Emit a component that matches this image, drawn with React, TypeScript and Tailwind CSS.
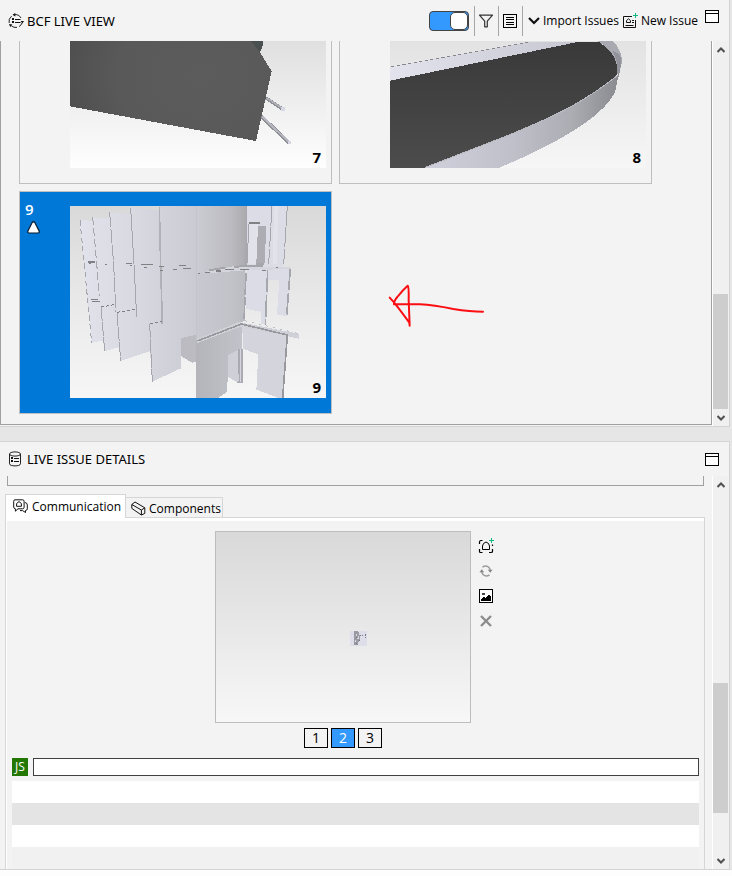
import React, { useState } from 'react';

interface PanelHeaderProps {
  title: string;
  icon: React.ReactNode;
  className: string;
  children?: React.ReactNode;
}

interface ScrollBarProps {
  label: string;
  thumbClass: string;
}

interface IssueCardProps {
  id: number;
  selected?: boolean;
  children: React.ReactNode;
}

const LiveViewIcon = () => (
  <svg width="16" height="16" viewBox="0 0 16 16" fill="none" stroke="#222" strokeWidth="1">
    <path d="M6 1.8 A6.4 6.4 0 0 1 13 5 M14 10 A6.4 6.4 0 0 1 11 13.6 M9 14.4 A6.6 6.6 0 0 1 3.4 12.8 M1.2 10 A6.4 6.4 0 0 1 3.6 3.2" />
    <path d="M7.3 0 L4.5 1.8 L7.3 3.6Z M12.6 8 L16 8 L14.4 10.6Z M1 11 L4.4 11.6 L2.2 14Z" fill="#111" stroke="none" />
    <path d="M4 5h2v2H4z M4 8h2v2H4z" fill="#111" stroke="none" />
    <path d="M7 6.5h5.5 M7 9.5h5.5" stroke="#111" />
  </svg>
);

const DetailsIcon = () => (
  <svg width="14" height="16" viewBox="0 0 14 16" fill="none" stroke="#222" strokeWidth="1">
    <path d="M1.5 3v9.8c0 2.8 11 2.8 11 0V3" />
    <ellipse cx="7" cy="3" rx="5.5" ry="2.1" />
    <path d="M3 6h2v2H3z M3 9h2v2H3z" fill="#111" stroke="none" />
    <path d="M6 7.5h5 M6 10.5h5" stroke="#111" />
  </svg>
);

const WindowIcon = () => (
  <svg width="14" height="13" viewBox="0 0 14 13" fill="white" stroke="#000" shapeRendering="crispEdges">
    <path d="M0.5 0.5h13v12h-13z M0.5 3.5h13" />
  </svg>
);

const FilterIcon = () => (
  <svg width="16" height="16" viewBox="0 0 16 16" fill="none" stroke="#333" strokeWidth="1.2">
    <path d="M1.5 2.2h13L9.3 8.2v5.6H6.7V8.2Z" strokeLinejoin="round" />
  </svg>
);

const ListIcon = () => (
  <svg width="14" height="14" viewBox="0 0 14 14" fill="none" stroke="#000" shapeRendering="crispEdges">
    <path d="M0.5 0.5h13v13h-13z M3 3.5h8 M3 5.5h8 M3 8.5h8 M3 10.5h8" />
  </svg>
);

const ChevronIcon = () => (
  <svg width="12" height="8" viewBox="0 0 12 8" fill="none" stroke="#111" strokeWidth="2.2">
    <path d="M1 1 L6 6 L11 1" />
  </svg>
);

const NewIssueIcon = () => (
  <svg className="shrink-0" width="16" height="16" viewBox="0 0 16 16" fill="none" stroke="#111">
    <path d="M9 3.5H0.5v11h12V7" />
    <path d="M3.5 9.5V7.6L5.5 5.8L7.5 7.6V9.5Z M2.5 12.5H10.5 M9 7.5h2 M9 9.5h2" />
    <path d="M12.5 0v5 M10 2.5h5" stroke="#10b981" />
  </svg>
);

const CommunicationIcon = () => (
  <svg className="shrink-0" width="15" height="15" viewBox="0 0 15 15" fill="none" stroke="#111">
    <path d="M2 0.8h7.6q1.5 0 1.5 1.5v6q0 1.5-1.5 1.5H5L2.4 12.2V9.8Q0.7 9.6 0.7 8V2.3Q0.7 0.8 2 0.8Z" />
    <path d="M3.6 7.3V4.5L6 2.6L8.4 4.5V7.3Z" />
    <path d="M12 3.5Q14.3 3.8 14.3 6v3.8q0 1.6-1.8 1.7v2L9.6 11.6H7" />
  </svg>
);

const ComponentsIcon = () => (
  <svg className="shrink-0" width="15" height="15" viewBox="0 0 15 15" fill="none" stroke="#111" strokeLinejoin="round">
    <path d="M0.8 3.5L4 1L13.8 6.8V12.4L10.4 14L0.8 7.4Z M0.8 3.5L10.4 9V14 M10.4 9L13.8 6.8" />
  </svg>
);

const CaptureIcon = () => (
  <svg width="16" height="16" viewBox="0 0 16 16" fill="none" stroke="#000">
    <path d="M1.5 6V4.5Q1.5 2.5 3 2.5H4.5 M1.5 11v2.5q0 1 1 1H4.5 M11 14.5h2q1.5 0 1.5-1V11 M14.5 8V6.5" strokeWidth="1.2" />
    <path d="M4.5 11.5V8L5.5 5.5L8 4L10.5 5.5L11.5 8v3.5Z" />
    <path d="M13.5 0v5 M11 2.5h5" stroke="#10b981" />
  </svg>
);

const RefreshIcon = () => (
  <svg width="16" height="16" viewBox="0 0 16 16" fill="none" stroke="#999" strokeWidth="1.5">
    <path d="M4.5 4.2Q8 1.8 11 4.5L12.4 7 M11.5 11.8Q8 14.2 5 11.5L3.6 9" />
    <path d="M9.8 6.8h4.8l-2.4 3z M1.4 9.2h4.8l-2.4-3z" fill="#888" stroke="none" />
  </svg>
);

const PictureIcon = () => (
  <svg width="14" height="14" viewBox="0 0 14 14" shapeRendering="crispEdges">
    <path d="M0.5 0.5h13v13h-13z" fill="white" stroke="#000" />
    <path d="M2 12V10l3-2l2 1l2-3h1l2 2v4Z" />
    <path d="M3 3.5h2.5v2H3z" fill="#444" />
  </svg>
);

const DeleteIcon = () => (
  <svg width="14" height="14" viewBox="0 0 14 14" stroke="#8c8c8c" strokeWidth="2.4">
    <path d="M2 2L12 12 M12 2L2 12" />
  </svg>
);

const PanelHeader: React.FC<PanelHeaderProps> = ({ title, icon, className, children }) => {
  return (
    <header className={`flex items-center pl-2 pr-[10px] ${className}`}>
      {icon}
      <h2 className="grow whitespace-nowrap font-['Noto_Sans','Open_Sans',sans-serif] text-[13px] leading-4">{title}</h2>
      {children}
    </header>
  );
};

const ScrollArrow: React.FC<{ up?: boolean }> = ({ up }) => (
  <svg width="8" height="6" viewBox="0 0 8 6" fill="none" stroke="#505050" strokeWidth="2">
    <path d={up ? 'M0.5 5L4 1.5L7.5 5' : 'M0.5 1L4 4.5L7.5 1'} />
  </svg>
);

const ScrollBar: React.FC<ScrollBarProps> = ({ label, thumbClass }) => {
  return (
    <div className="flex w-[17px] shrink-0 flex-col border-l border-white bg-[#f0f0f0]">
      <button type="button" aria-label={`${label} up`} className="flex h-[17px] items-center justify-center">
        <ScrollArrow up />
      </button>
      <div className="flex grow flex-col justify-end">
        <div className={`mr-px bg-[#cdcdcd] ${thumbClass}`} />
      </div>
      <button type="button" aria-label={`${label} down`} className="flex h-[17px] items-center justify-center">
        <ScrollArrow />
      </button>
    </div>
  );
};

const IssueCard: React.FC<IssueCardProps> = ({ id, selected, children }) => {
  return (
    <article
      className={`flex w-[313px] shrink-0 border border-[#bfbfbf] pt-[14px] pb-[15px] pr-[5px] ${
        selected ? 'bg-[#0078d7] text-white' : ''
      }`}
    >
      <div className="w-[50px] shrink-0 pl-[5px]">
        {selected && (
          <>
            <div className="-mt-[5px] text-[15px] leading-4 font-semibold">{id}</div>
            <svg className="mt-1 ml-[2px]" width="13" height="13" viewBox="0 0 13 13">
              <path
                d="M5.3 1.3Q6.5 0.2 7.7 1.3L12.1 10Q12.6 12 11 12H2Q0.4 12 0.9 10Z"
                fill="white"
                stroke="#0a1a2a"
                strokeWidth="1.2"
              />
            </svg>
          </>
        )}
      </div>
      <div className="relative h-[192px] w-[256px]">
        {children}
        <span className="absolute right-[5px] bottom-[3px] text-[15px] leading-4 font-bold text-black">{id}</span>
      </div>
    </article>
  );
};

const SlabScene = () => (
  <svg width="256" height="192" viewBox="30 -163 768 576" shapeRendering="crispEdges">
    <defs>
      <linearGradient id="slab-sky" x1="0" y1="0" x2="0" y2="1">
        <stop offset="0" stopColor="#cfcfcf" />
        <stop offset="0.35" stopColor="#e0e0e0" />
        <stop offset="1" stopColor="#fefefe" />
      </linearGradient>
      <radialGradient id="slab-face" cx="0.65" cy="0.6" r="0.7">
        <stop offset="0" stopColor="#5c5c5c" />
        <stop offset="0.6" stopColor="#595959" />
        <stop offset="1" stopColor="#4e4e4e" />
      </radialGradient>
    </defs>
    <rect x="30" y="-163" width="768" height="576" fill="url(#slab-sky)" />
    <path d="M618 203L668 236" stroke="#8f8f96" strokeWidth="10" />
    <path d="M620 203L668 234" stroke="#b0b0b8" strokeWidth="5" />
    <path d="M604 258L688 338" stroke="#8f8f96" strokeWidth="11" />
    <path d="M606 258L688 336" stroke="#b6b6bf" strokeWidth="6" />
    <path d="M664 231h10v10h-10z M684 332h9v10h-9z" fill="#d6d6e4" />
    <path d="M30 -163H600V66L635 123L588 332L30 228Z" fill="url(#slab-face)" />
    <path d="M574 33H609V44L600 66Z" fill="#4a504f" />
  </svg>
);

const CurvedScene = () => (
  <svg width="256" height="192" viewBox="180 -163 768 576" shapeRendering="crispEdges">
    <defs>
      <linearGradient id="curve-sky" x1="0" y1="0" x2="0" y2="1">
        <stop offset="0" stopColor="#d6d6d6" />
        <stop offset="0.35" stopColor="#e3e3e3" />
        <stop offset="1" stopColor="#f6f6f6" />
      </linearGradient>
      <linearGradient id="curve-back" x1="0" y1="0" x2="1" y2="0">
        <stop offset="0" stopColor="#e3e3ee" />
        <stop offset="1" stopColor="#c6c6d0" />
      </linearGradient>
      <linearGradient id="curve-floor" x1="0" y1="0" x2="0" y2="1">
        <stop offset="0" stopColor="#393939" />
        <stop offset="1" stopColor="#4c4c4c" />
      </linearGradient>
      <linearGradient id="curve-rim" x1="0" y1="0" x2="1" y2="0">
        <stop offset="0" stopColor="#d0d0dc" />
        <stop offset="0.45" stopColor="#c0c0ca" />
        <stop offset="0.75" stopColor="#acacb3" />
        <stop offset="1" stopColor="#88888f" />
      </linearGradient>
    </defs>
    <rect x="180" y="-163" width="768" height="576" fill="url(#curve-sky)" />
    <path d="M180 110L604 34H756L180 152Z" fill="url(#curve-back)" />
    <path d="M184 109L604 34" stroke="#86868c" strokeWidth="3" strokeDasharray="9 8" />
    <path d="M748 34H806Q866 76 864 120C862 150 800 185 740 222C680 255 560 306 496 334L284 413H180V151Z" fill="url(#curve-floor)" />
    <path d="M804 33H850Q878 62 875 98L866 140L862 128Q866 72 804 33Z" fill="#a9a9b1" />
    <path d="M846 60Q878 72 874 98L866 140L862 128Q865 90 846 60Z" fill="#92929a" />
    <path
      d="M864 132L872 104L856 182C840 222 790 265 716 310C650 350 560 391 505 413H284L496 331C560 306 680 255 740 220C800 184 842 154 864 132Z"
      fill="url(#curve-rim)"
    />
    <path d="M284 412L496 330C560 305 680 254 740 219C800 184 842 152 864 134" fill="none" stroke="#b9b9c2" strokeWidth="3" />
  </svg>
);

const WallsScene = () => (
  <svg width="256" height="192" viewBox="210 63 768 576" shapeRendering="crispEdges">
    <defs>
      <linearGradient id="walls-sky" x1="0" y1="0" x2="0" y2="1">
        <stop offset="0" stopColor="#d9d9d9" />
        <stop offset="0.6" stopColor="#ececec" />
        <stop offset="1" stopColor="#f6f6f6" />
      </linearGradient>
      <linearGradient id="walls-left" x1="0" y1="0" x2="1" y2="0">
        <stop offset="0" stopColor="#e2e2ec" />
        <stop offset="0.5" stopColor="#d8d8e1" />
        <stop offset="1" stopColor="#cacad2" />
      </linearGradient>
      <linearGradient id="walls-core" x1="0" y1="0" x2="1" y2="0">
        <stop offset="0" stopColor="#cbcbd3" />
        <stop offset="0.7" stopColor="#bababf" />
        <stop offset="1" stopColor="#a9a9ae" />
      </linearGradient>
      <linearGradient id="walls-front" x1="0" y1="0" x2="1" y2="0">
        <stop offset="0" stopColor="#b4b4ba" />
        <stop offset="1" stopColor="#c2c2ca" />
      </linearGradient>
    </defs>
    <rect x="210" y="63" width="768" height="576" fill="url(#walls-sky)" />
    <path
      d="M238 104L278 108V97L328 101V82L392 88V66L478 76V63H592V530L576 533L543 513V550L457 590L450 498L362 528L357 487L314 498L309 467L275 473Z"
      fill="url(#walls-left)"
    />
    <path d="M592 63H741V240L734 262V408L592 466Z" fill="url(#walls-core)" />
    <path d="M592 265L734 252V408L592 466Z" fill="#c6c6ce" fillOpacity="0.6" />
    <path d="M543 460L592 448V530L576 533L543 513Z" fill="#bbbbc1" />
    <path d="M741 63H862L850 248H872L860 394L831 388L838 286H806L796 420L782 416V380L738 372V262H741Z" fill="#dcdce6" />
    <path d="M822 63H836L830 238H818Z M746 118H774V236H744Z" fill="#e2e2ea" />
    <path d="M774 123H798L795 234H769Z" fill="#acacb2" />
    <path d="M588 470L726 416V490L684 510L682 620L654 639H588Z" fill="url(#walls-front)" />
    <path d="M726 416L862 452L848 639H836L769 614L775 508L730 492Z" fill="#d4d4dd" />
    <path d="M684 510L716 494V594L684 576Z" fill="#cfcfd8" />
    <path d="M714 493H730V594H708L716 588Z" fill="#aaaab0" />
    <path d="M720 493V590" stroke="#d5d5dd" strokeWidth="3" />
    <path d="M590 462L716 411L896 446V461L726 424L592 474Z" fill="#d0d0d8" />
    <g fill="none" stroke="#a6a6ad" strokeWidth="3">
      <path d="M592 468L724 417L862 450L848 639" stroke="#98989d" strokeWidth="5" />
      <path d="M240 106L252 230L275 473" strokeDasharray="16 10" />
      <path d="M278 97L290 235L298 332" strokeDasharray="24 9" />
      <path d="M329 82L341 238L348 382" strokeDasharray="44 5" />
      <path d="M392 68L402 238L410 395" />
      <path d="M478 65L482 240L487 416" stroke="#b0b0b7" strokeWidth="5" />
      <path d="M303 366L314 498 M351 382L362 528 M449 416L457 590" strokeDasharray="42 3" />
      <path d="M741 63L737 240 M816 63L806 238 M862 63L851 238" strokeDasharray="60 4" />
      <path d="M738 264L732 408 M803 256L796 420 M871 250L860 394" strokeWidth="5" strokeDasharray="66 7" />
      <path d="M746 118L742 235" />
    </g>
    <path d="M590 63V466" stroke="#c4c4cb" strokeWidth="3" />
    <path d="M620 258L700 244L872 247V252L735 256L630 264Z" fill="#d5d5de" />
    <g fill="none" stroke="#808085" strokeWidth="3">
      <path d="M303 366L349 358 M351 382L407 373 M450 416L487 409" strokeDasharray="9 6" />
      <path d="M264 231H286 M378 235H396 M422 238H460 M536 241H558 M746 114H780" strokeWidth="4" />
      <path d="M266 235H272 M315 238H321 M390 240H396 M432 247H442 M478 243H492 M480 256H490 M520 253H532 M550 250H574" />
      <path d="M594 265H600 M614 262H630 M648 258H662 M676 254H702 M720 253H748 M786 256H798 M828 247H834" strokeWidth="4" />
      <path d="M626 256L676 248 M702 245L790 242 M768 236H792" stroke="#a5a5ab" strokeWidth="6" />
      <path d="M274 343H294 M276 348H300" />
      <path d="M734 407L896 446" stroke="#aaaab0" strokeWidth="2" strokeDasharray="6 16" />
    </g>
  </svg>
);

const RedArrow = () => (
  <svg
    className="pointer-events-none absolute top-[229px] left-[379px]"
    width="120"
    height="70"
    viewBox="0 0 360 210"
    fill="none"
    stroke="#fb0d12"
    strokeWidth="6"
    strokeLinecap="round"
    strokeLinejoin="round"
  >
    <path d="M309 125Q270 125 220 117Q160 105 120 103L42 103Q41 93 52 81Q68 60 83 47Q87 50 86 90L89 167L88 158Q62 122 42 97L29 83" />
  </svg>
);

const ToolbarDivider = () => <span className="h-[30px] w-px bg-[#a6a6a6]" />;

const LiveView = () => {
  const [live, setLive] = useState(true);

  return (
    <section className="border-r border-b border-[#d4d4d4] bg-[#f3f3f3]">
      <PanelHeader title="BCF LIVE VIEW" icon={<span className="w-[19px]"><LiveViewIcon /></span>} className="h-[41px]">
        <input
          type="checkbox"
          role="switch"
          aria-label="Live view"
          checked={live}
          onChange={(e) => setLive(e.target.checked)}
          className="mr-[5px] flex h-5 w-10 shrink-0 appearance-none items-center rounded border border-[#444] bg-white before:h-[18px] before:w-[18px] before:rounded-[5px] before:border before:border-[#444] before:bg-white checked:justify-end checked:bg-[#3399ff]"
        />
        <ToolbarDivider />
        <button type="button" aria-label="Filter" className="flex w-[23px] justify-center">
          <FilterIcon />
        </button>
        <ToolbarDivider />
        <button type="button" aria-label="List" className="flex w-[23px] justify-center">
          <ListIcon />
        </button>
        <ToolbarDivider />
        <button type="button" className="ml-[5px] flex items-center gap-[3px] text-[12px] leading-4 whitespace-nowrap">
          <ChevronIcon />
          Import Issues
        </button>
        <button type="button" className="ml-[4px] flex items-center gap-[2px] text-[12px] leading-4 whitespace-nowrap">
          <NewIssueIcon />
          New Issue
        </button>
        <button type="button" aria-label="Maximize live view" className="mt-[10px] ml-[7px] self-start">
          <WindowIcon />
        </button>
      </PanelHeader>
      <div className="flex h-[385px]">
        <div className="mb-px flex grow overflow-hidden border-r border-b border-l border-[#a0a0a0]">
          <div className="relative flex grow flex-col justify-end gap-[7px] pb-[10px] pl-[18px]">
            <div className="flex gap-[7px]">
              <IssueCard id={7}>
                <SlabScene />
              </IssueCard>
              <IssueCard id={8}>
                <CurvedScene />
              </IssueCard>
            </div>
            <div className="flex">
              <IssueCard id={9} selected>
                <WallsScene />
              </IssueCard>
            </div>
            <RedArrow />
          </div>
        </div>
        <ScrollBar label="Scroll issues" thumbClass="h-[115px]" />
      </div>
    </section>
  );
};

const Snapshot = () => (
  <svg className="absolute top-[99px] left-[134px]" width="17" height="15" viewBox="0 0 17 15" shapeRendering="crispEdges">
    <path d="M0 0h17v15H0z" fill="#dedeea" />
    <path d="M4 0h4v1h1v3h1v6h-1v1H8v3H4z" fill="#9a9aa2" />
    <path d="M6 3h1v2H6z M8 5h1v3H8z M5 9h1v2H5z M7 7h1v1H7z" fill="#d9d9e4" />
    <path d="M6 6h1v1H6z M10 4h1v1h-1z M12 4h1v1h-1z M15 3h1v2h-1z M9 9h1v1H9z M15 6h1v1h-1z M6 12h1v1H6z" fill="#77777f" />
  </svg>
);

const Communication = () => {
  const [page, setPage] = useState(2);
  const [comment, setComment] = useState('');

  const tools = [
    { label: 'Add viewpoint', icon: <CaptureIcon /> },
    { label: 'Update viewpoint', icon: <RefreshIcon /> },
    { label: 'Load picture', icon: <PictureIcon /> },
    { label: 'Delete viewpoint', icon: <DeleteIcon /> },
  ];

  return (
    <div role="tabpanel" className="border-x border-t border-[#d6d6d6]">
      <div className="border-t-[3px] border-l border-white pt-[10px] pr-[5px] pl-[5px]">
        <div className="flex justify-center gap-[7px] pr-[2px]">
          <div className="flex flex-col items-center gap-[5px]">
            <div className="relative h-[192px] w-[256px] border border-[#bdbdbd] bg-linear-to-b from-[#d9d9d9] to-[#f7f7f7]">
              <Snapshot />
            </div>
            <nav className="flex gap-[3px]">
              {[1, 2, 3].map((n) => (
                <button
                  key={n}
                  type="button"
                  onClick={() => setPage(n)}
                  className={`flex h-5 w-6 items-center justify-center border border-black text-[14px] leading-4 ${
                    n === page ? 'bg-[#3399ff] text-white' : ''
                  }`}
                >
                  {n}
                </button>
              ))}
            </nav>
          </div>
          <div className="flex flex-col gap-[9px] pt-[7px]">
            {tools.map((tool) => (
              <button key={tool.label} type="button" aria-label={tool.label} className="flex h-4 w-4 items-center justify-center">
                {tool.icon}
              </button>
            ))}
          </div>
        </div>
        <div className="mt-[10px] flex gap-[5px]">
          <label htmlFor="comment" className="flex h-[18px] w-4 items-center justify-center bg-[#237804] text-[12px] leading-4 text-white">
            JS
          </label>
          <input
            id="comment"
            type="text"
            value={comment}
            onChange={(e) => setComment(e.target.value)}
            className="h-[18px] min-w-0 grow border border-[#404040] bg-white px-1 text-[12px] outline-none"
          />
        </div>
        <table aria-label="Comments" className="mt-[5px] w-full">
          <tbody>
            <tr className="h-[22px] bg-white"><td /></tr>
            <tr className="h-[22px] bg-[#e4e4e4]"><td /></tr>
            <tr className="h-[22px] bg-white"><td /></tr>
            <tr className="h-[22px] bg-[#f1f1f1]"><td /></tr>
          </tbody>
        </table>
      </div>
    </div>
  );
};

const IssueDetails = () => {
  return (
    <section className="border-y border-r border-[#d4d4d4] bg-[#f3f3f3]">
      <PanelHeader title="LIVE ISSUE DETAILS" icon={<span className="w-[19px]"><DetailsIcon /></span>} className="h-[34px]">
        <button type="button" aria-label="Maximize details">
          <WindowIcon />
        </button>
      </PanelHeader>
      <div className="flex">
        <div className="min-w-0 grow pr-[7px] pl-[5px]">
          <div className="mr-px ml-[2px] h-[10px] border-x border-b border-[#a0a0a0]" />
          <div role="tablist" className="mt-2 flex items-end text-[12px] leading-4">
            <button
              type="button"
              role="tab"
              aria-selected="true"
              className="relative -mb-px flex h-[24px] w-[121px] items-center gap-1 border-x border-t border-[#d6d6d6] bg-white pl-[7px]"
            >
              <CommunicationIcon />
              Communication
            </button>
            <button
              type="button"
              role="tab"
              aria-selected="false"
              className="flex h-5 w-[97px] items-center gap-[3px] border-t border-r border-[#d6d6d6] pt-[2px] pl-[5px]"
            >
              <ComponentsIcon />
              Components
            </button>
          </div>
          <Communication />
        </div>
        <ScrollBar label="Scroll details" thumbClass="mb-[39px] h-[130px]" />
      </div>
    </section>
  );
};

const App: React.FC = () => {
  return (
    <main className="min-h-screen bg-[#fdfdfd] font-['Open_Sans','Noto_Sans',sans-serif] text-black">
      <div className="bg-[#e6e6e6] pr-[2px]">
        <LiveView />
        <div className="h-[14px]" />
        <IssueDetails />
      </div>
    </main>
  );
};

export default App;
